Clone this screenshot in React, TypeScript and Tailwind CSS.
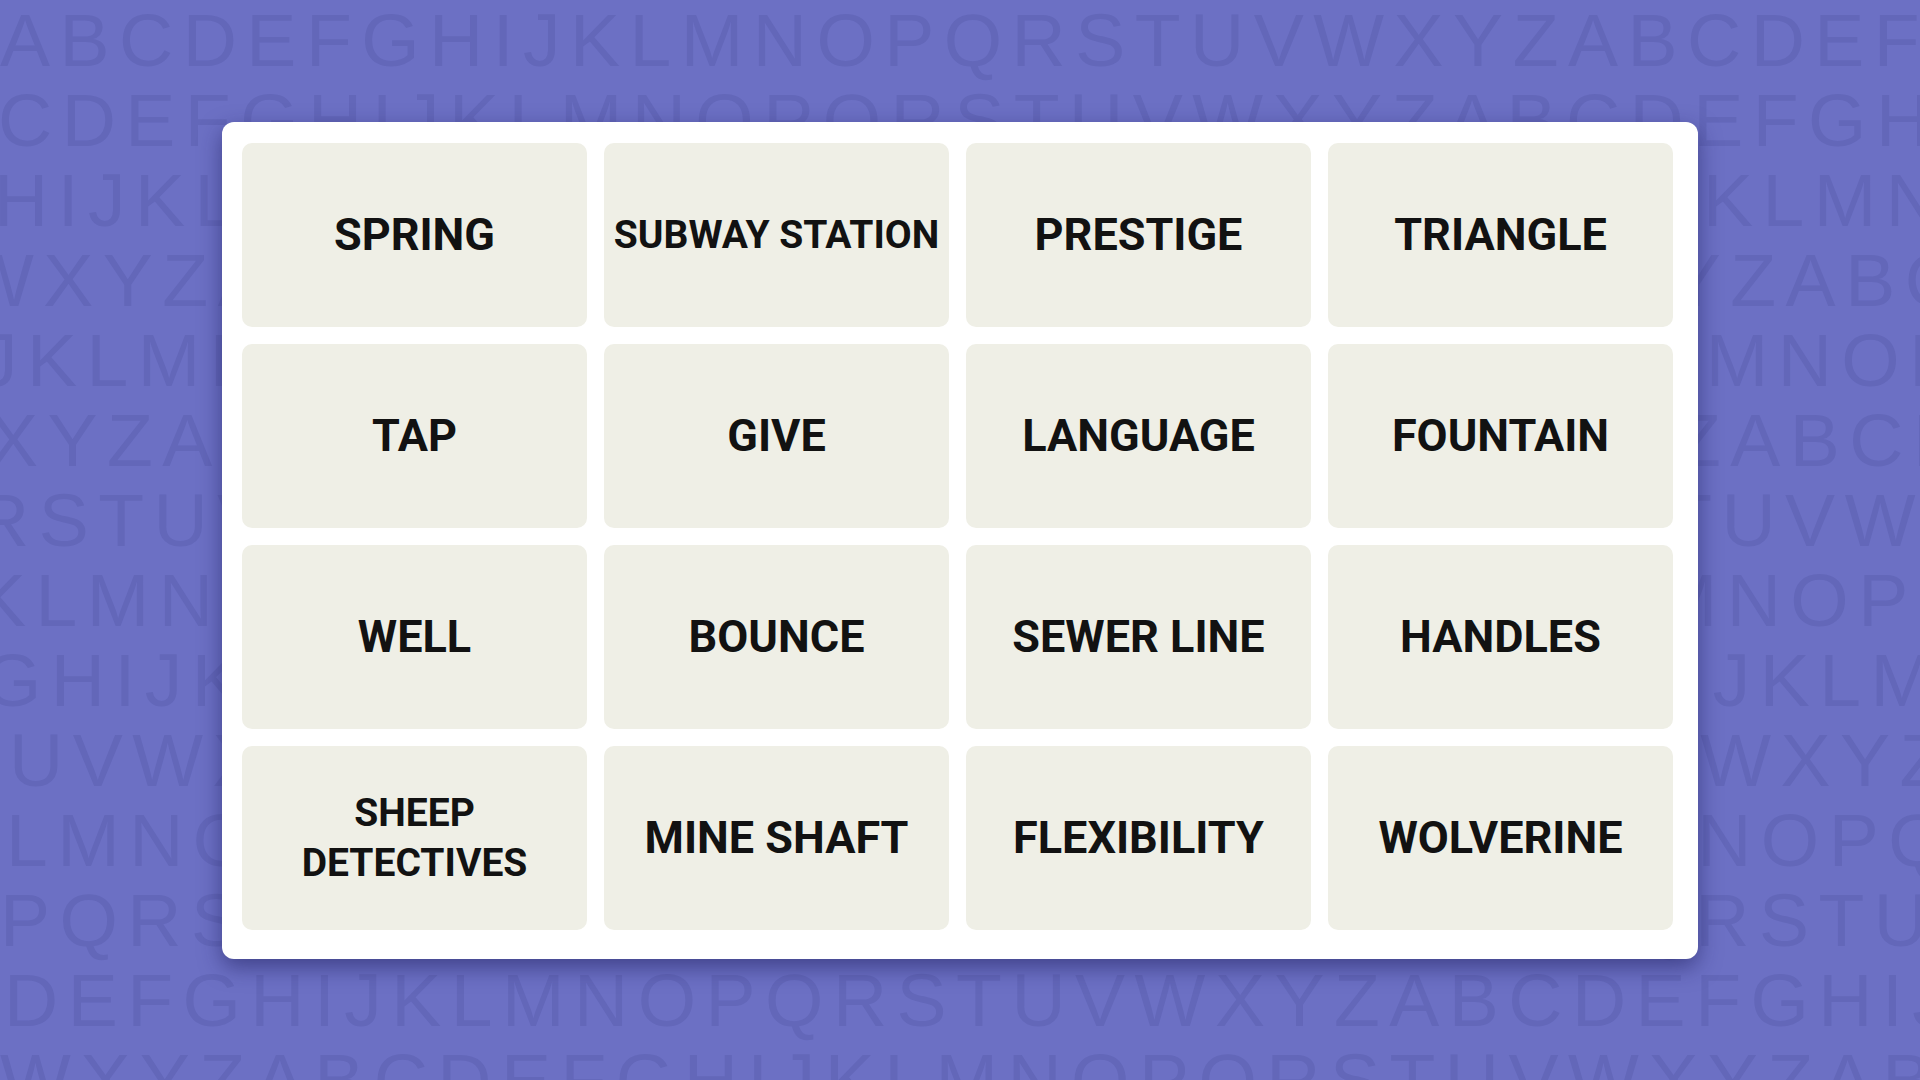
import React from "react";

type Tile = {
  id: number;
  label: string;
  small?: boolean;
};

const tiles: Tile[] = [
  { id: 1, label: "SPRING" },
  { id: 2, label: "SUBWAY STATION", small: true },
  { id: 3, label: "PRESTIGE" },
  { id: 4, label: "TRIANGLE" },
  { id: 5, label: "TAP" },
  { id: 6, label: "GIVE" },
  { id: 7, label: "LANGUAGE" },
  { id: 8, label: "FOUNTAIN" },
  { id: 9, label: "WELL" },
  { id: 10, label: "BOUNCE" },
  { id: 11, label: "SEWER LINE" },
  { id: 12, label: "HANDLES" },
  { id: 13, label: "SHEEP DETECTIVES", small: true },
  { id: 14, label: "MINE SHAFT" },
  { id: 15, label: "FLEXIBILITY" },
  { id: 16, label: "WOLVERINE" },
];

// each backdrop row: the letter it starts on and how far it is nudged sideways
const letterRows: { start: string; shift: string }[] = [
  { start: "A", shift: "ml-0" },
  { start: "C", shift: "-ml-[2px]" },
  { start: "H", shift: "-ml-[6px]" },
  { start: "W", shift: "-ml-[37px]" },
  { start: "J", shift: "-ml-[20px]" },
  { start: "X", shift: "-ml-[12px]" },
  { start: "R", shift: "-ml-[25px]" },
  { start: "K", shift: "-ml-[24px]" },
  { start: "G", shift: "-ml-[17px]" },
  { start: "U", shift: "ml-[9px]" },
  { start: "L", shift: "ml-[6px]" },
  { start: "P", shift: "ml-0" },
  { start: "D", shift: "ml-[4px]" },
  { start: "W", shift: "ml-0" },
];

const ALPHABET = "ABCDEFGHIJKLMNOPQRSTUVWXYZ";

const rowText = (start: string) => {
  const i = ALPHABET.indexOf(start);
  const run = ALPHABET.slice(i) + ALPHABET.slice(0, i);
  return run + run;
};

const LetterBackdrop = () => (
  <div className="absolute inset-0 overflow-hidden select-none" aria-hidden>
    {letterRows.map((row, idx) => (
      <div
        key={idx}
        className={`h-[80px] whitespace-nowrap text-[75px] leading-[80px] tracking-[9.5px] text-[#6367b9] ${row.shift}`}
        style={{ fontFamily: '"Liberation Sans", Arial, sans-serif' }}
      >
        {rowText(row.start)}
      </div>
    ))}
  </div>
);

const WordTile = ({ tile }: { tile: Tile }) => (
  <div className="flex items-center justify-center rounded-[10px] bg-[#efefe6] px-2 text-center">
    <span
      className={
        tile.small
          ? "text-[39px] leading-[50px] font-bold text-[#121212]"
          : "text-[45px] leading-[50px] font-bold text-[#121212]"
      }
      style={{ fontFamily: 'Roboto, "Liberation Sans", sans-serif' }}
    >
      {tile.label === "SHEEP DETECTIVES" ? (
        <>
          SHEEP
          <br />
          DETECTIVES
        </>
      ) : (
        tile.label
      )}
    </span>
  </div>
);

export default function App() {
  return (
    <div className="relative h-[1080px] w-[1920px] overflow-hidden bg-[#6c70c4]">
      <LetterBackdrop />
      <div className="relative flex h-full w-full items-center justify-center">
        <div className="rounded-[12px] bg-white pt-[21px] pl-[20px] pr-[25px] pb-[29px] shadow-[0_8px_22px_rgba(28,28,90,0.55)]">
          <div className="grid grid-cols-[repeat(4,345px)] grid-rows-[repeat(4,184px)] gap-x-[17px] gap-y-[17px]">
            {tiles.map((tile) => (
              <WordTile key={tile.id} tile={tile} />
            ))}
          </div>
        </div>
      </div>
    </div>
  );
}
